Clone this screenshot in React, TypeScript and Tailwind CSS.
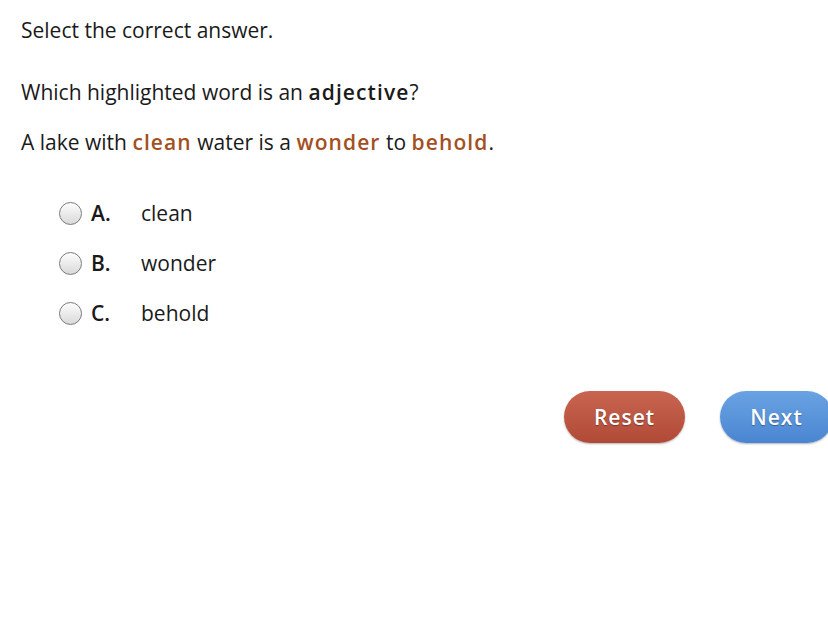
function Radio() {
  return (
    <span className="inline-block h-[23px] w-[23px] rounded-full border border-[#7a7a7a] bg-gradient-to-b from-[#fdfdfd] to-[#d9d9d9] shadow-[inset_0_1px_1px_rgba(255,255,255,0.8)]" />
  )
}

const options = [
  { letter: 'A.', text: 'clean' },
  { letter: 'B.', text: 'wonder' },
  { letter: 'C.', text: 'behold' },
]

function Hl({ children }: { children: string }) {
  return <span className="font-semibold tracking-[1.1px] text-[#a3501f]">{children}</span>
}

export default function App() {
  return (
    <div className="h-[640px] w-[828px] overflow-hidden bg-white font-['Open_Sans',sans-serif] text-[21px] leading-[28px] text-[#1a1a1a]">
      <div className="pl-[21px] pt-[16px]">
        <p>Select the correct answer.</p>
        <p className="mt-[34px]">
          Which highlighted word is an <span className="font-semibold tracking-[1.1px]">adjective</span>?
        </p>
        <p className="mt-[22px]">
          A lake with <Hl>clean</Hl> water is a <Hl>wonder</Hl> to <Hl>behold</Hl>.
        </p>
        <div className="mt-[43px] flex flex-col gap-[22px] pl-[38px]">
          {options.map((o) => (
            <label key={o.letter} className="flex h-[28px] items-center">
              <Radio />
              <span className="ml-[9px] w-[50px] font-semibold">{o.letter}</span>
              <span>{o.text}</span>
            </label>
          ))}
        </div>
      </div>
      <div className="mt-[64px] flex w-[900px] gap-[35px] pl-[564px]">
        <button className="h-[52px] w-[121px] shrink-0 rounded-full bg-gradient-to-b from-[#c96450] to-[#b04a36] text-[21px] font-semibold tracking-[1px] text-white [text-shadow:0_1px_1px_rgba(0,0,0,0.35)] shadow-[0_1px_2px_rgba(0,0,0,0.3)]">
          Reset
        </button>
        <button className="h-[52px] w-[113px] shrink-0 rounded-full bg-gradient-to-b from-[#6aa3e3] to-[#4a85d1] text-[21px] font-semibold tracking-[1px] text-white [text-shadow:0_1px_1px_rgba(0,0,0,0.35)] shadow-[0_1px_2px_rgba(0,0,0,0.3)]">
          Next
        </button>
      </div>
    </div>
  )
}
